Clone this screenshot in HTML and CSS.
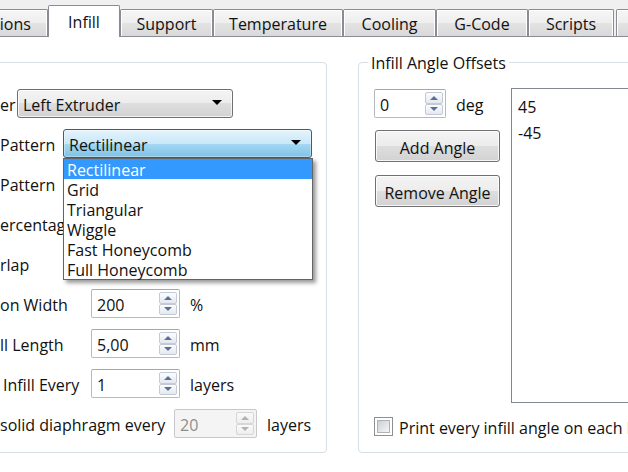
FILE: index.html
```html
<!DOCTYPE html>
<html lang="en">
<head>
<meta charset="utf-8">
<title>Infill</title>
<link rel="stylesheet" href="styles.css">
</head>
<body>
<div class="tabbar">
  <div class="tab tab--options">tions</div>
  <div class="tab tab--active tab--infill">Infill</div>
  <div class="tab tab--support">Support</div>
  <div class="tab tab--temp">Temperature</div>
  <div class="tab tab--cooling">Cooling</div>
  <div class="tab tab--gcode">G-Code</div>
  <div class="tab tab--scripts">Scripts</div>
  <div class="tab tab--next"></div>
</div>
<div class="pane">
  <div class="groups">
    <div class="group group--left">
      <div class="form">
        <div class="row">
          <span class="lbl lbl--w17">er</span>
          <div class="combo combo--extruder"><span class="txt">Left Extruder</span><span class="caret"></span></div>
        </div>
        <div class="row">
          <span class="lbl lbl--w63">Pattern</span>
          <div class="combo combo--pattern combo--pressed"><span class="txt">Rectilinear</span><span class="caret"></span>
            <div class="popup">
              <div class="popup-item popup-item--sel">Rectilinear</div>
              <div class="popup-item">Grid</div>
              <div class="popup-item">Triangular</div>
              <div class="popup-item">Wiggle</div>
              <div class="popup-item">Fast Honeycomb</div>
              <div class="popup-item">Full Honeycomb</div>
            </div>
          </div>
        </div>
        <div class="row"><span class="lbl">Pattern</span></div>
        <div class="row"><span class="lbl lbl--w63 lbl--clip">ercentag</span></div>
        <div class="row"><span class="lbl">rlap</span></div>
        <div class="row">
          <span class="lbl lbl--w91">on Width</span>
          <div class="spin spin--wide"><span class="spin-val txt">200</span><span class="spin-btns"><span class="spin-btn"><span class="arr-up"></span></span><span class="spin-btn"><span class="arr-down"></span></span></span></div>
          <span class="unit">%</span>
        </div>
        <div class="row">
          <span class="lbl lbl--w91">ll Length</span>
          <div class="spin spin--wide"><span class="spin-val txt">5,00</span><span class="spin-btns"><span class="spin-btn"><span class="arr-up"></span></span><span class="spin-btn"><span class="arr-down"></span></span></span></div>
          <span class="unit">mm</span>
        </div>
        <div class="row">
          <span class="lbl lbl--w91 lbl--indent">Infill Every</span>
          <div class="spin spin--wide"><span class="spin-val txt">1</span><span class="spin-btns"><span class="spin-btn"><span class="arr-up"></span></span><span class="spin-btn"><span class="arr-down"></span></span></span></div>
          <span class="unit">layers</span>
        </div>
        <div class="row">
          <span class="lbl lbl--w174">solid diaphragm every</span>
          <div class="spin spin--diaphragm spin--disabled"><span class="spin-val txt">20</span><span class="spin-btns"><span class="spin-btn"><span class="arr-up"></span></span><span class="spin-btn"><span class="arr-down"></span></span></span></div>
          <span class="unit">layers</span>
        </div>
      </div>
    </div>
    <div class="group group--right">
      <span class="group-title">Infill Angle Offsets</span>
      <div class="angle-row">
        <div class="angle-col">
          <div class="angle-spin-row">
            <div class="spin spin--angle"><span class="spin-val txt">0</span><span class="spin-btns"><span class="spin-btn"><span class="arr-up"></span></span><span class="spin-btn"><span class="arr-down"></span></span></span></div>
            <span class="txt">deg</span>
          </div>
          <div class="btn btn--add"><span class="txt">Add Angle</span></div>
          <div class="btn btn--remove"><span class="txt">Remove Angle</span></div>
        </div>
        <div class="listbox">
          <div class="list-item">45</div>
          <div class="list-item">-45</div>
        </div>
      </div>
      <div class="check-row">
        <span class="checkbox"><span class="checkbox-inner"></span></span>
        <span class="check-label txt">Print every infill angle on each layer</span>
      </div>
    </div>
  </div>
</div>
</body>
</html>
```
FILE: styles.css
```css
html, body {
  margin: 0;
  padding: 0;
  overflow: hidden;
}
body {
  width: 628px;
  height: 472px;
  background: #f0f0f0;
  font-family: "Open Sans", "Noto Sans", sans-serif;
  font-size: 16px;
  line-height: 20px;
  color: #111;
}

/* text that sits in a vertically centred flex box: nudge down like the Win7 font */
.txt,
.lbl,
.unit {
  padding-top: 3px;
}

/* ---------- tabs ---------- */
.tabbar {
  display: flex;
  align-items: flex-end;
  height: 36px;
}
.tab {
  flex: none;
  box-sizing: border-box;
  height: 27px;
  border: 1px solid #898c95;
  border-bottom: none;
  border-radius: 2px 2px 0 0;
  background: linear-gradient(#f6f6f6, #eeeeee 50%, #e3e3e3 50%, #d9d9d9);
  box-shadow: inset 1px 1px 0 #fff, inset -1px 0 0 #fff;
  display: flex;
  align-items: center;
  justify-content: center;
  white-space: nowrap;
  padding-top: 2px;
}
.tab--active {
  height: 32px;
  margin-bottom: -1px;
  background: #fff;
  box-shadow: none;
  position: relative;
  z-index: 1;
  padding-top: 0;
}
.tab--options { width: 71px; margin-left: -23px; }
.tab--infill { width: 72px; }
.tab--support { width: 93px; }
.tab--temp { width: 130px; }
.tab--cooling { width: 93px; }
.tab--gcode { width: 92px; }
.tab--scripts { width: 86px; }
.tab--next { width: 60px; margin-left: 2px; }

/* ---------- pane ---------- */
.pane {
  background: #fff;
  border-top: 1px solid #898c95;
  height: 435px;
}
.groups {
  display: flex;
  gap: 31px;
  margin-left: -40px;
  padding-top: 25px;
}
.group {
  flex: none;
  box-sizing: border-box;
  height: 391px;
  border: 1px solid #d5dfe5;
  border-radius: 4px;
}
.group--left {
  width: 367px;
  padding: 26px 0 0 39px;
}
.group--right {
  width: 340px;
  position: relative;
  padding: 25px 0 0 15px;
  display: flex;
  flex-direction: column;
}
.group-title {
  position: absolute;
  top: -10px;
  left: 9px;
  padding: 0 3px;
  background: #fff;
}

/* ---------- form rows ---------- */
.form {
  display: flex;
  flex-direction: column;
  gap: 11px;
}
.row {
  display: flex;
  align-items: center;
  height: 29px;
}
.lbl {
  flex: none;
  white-space: nowrap;
}
.lbl--w17 { width: 17px; }
.lbl--w63 { width: 63px; }
.lbl--w91 { width: 91px; }
.lbl--w174 { width: 174px; }
.lbl--clip { overflow: hidden; }
.lbl--indent { box-sizing: border-box; padding-left: 3px; }
.unit { margin-left: 10px; }

/* ---------- combobox ---------- */
.combo {
  flex: none;
  position: relative;
  box-sizing: border-box;
  height: 29px;
  border: 1px solid #707070;
  border-radius: 3px;
  background: linear-gradient(#f4f4f4, #ececec 50%, #dedede 50%, #d2d2d2);
  box-shadow: inset 0 0 0 1px rgba(255, 255, 255, 0.7);
  display: flex;
  align-items: center;
  justify-content: space-between;
  padding: 0 10px 0 5px;
  white-space: nowrap;
}
.combo--extruder { width: 216px; }
.combo--pattern { width: 249px; }
.combo--pressed {
  border-color: #2c628b;
  background: linear-gradient(#e5f4fc, #c9e8f8 50%, #a6d8f3 50%, #80c2e6);
  box-shadow: inset 0 0 0 1px rgba(255, 255, 255, 0.35);
}
.caret {
  width: 0;
  height: 0;
  margin-bottom: 2px;
  border-left: 5px solid transparent;
  border-right: 5px solid transparent;
  border-top: 5px solid #000;
}

/* ---------- popup list ---------- */
.popup {
  position: absolute;
  top: 28px;
  left: -1px;
  width: 250px;
  box-sizing: border-box;
  border: 1px solid #646464;
  background: #fff;
  box-shadow: 3px 3px 4px rgba(0, 0, 0, 0.4);
  z-index: 5;
}
.popup-item {
  box-sizing: border-box;
  height: 20px;
  line-height: 18px;
  padding: 2px 0 0 3px;
  color: #111;
}
.popup-item--sel {
  background: #3399ff;
  color: #fff;
}

/* ---------- spin box ---------- */
.spin {
  flex: none;
  box-sizing: border-box;
  height: 29px;
  border: 1px solid #b5b9c1;
  border-top-color: #a3a7af;
  border-radius: 2px;
  background: #fff;
  display: flex;
  align-items: center;
  padding-left: 5px;
}
.spin--wide { width: 89px; }
.spin--diaphragm { width: 83px; }
.spin--angle { width: 72px; }
.spin-val { flex: 1; }
.spin-btns {
  flex: none;
  width: 18px;
  height: 23px;
  margin-right: 2px;
  display: flex;
  flex-direction: column;
}
.spin-btn {
  flex: 1;
  box-sizing: border-box;
  border: 1px solid #c3cad6;
  border-radius: 2px;
  background: linear-gradient(#fbfcfd, #e4e8ef);
  display: flex;
  align-items: center;
  justify-content: center;
}
.arr-up {
  width: 0;
  height: 0;
  border-left: 4px solid transparent;
  border-right: 4px solid transparent;
  border-bottom: 4px solid #5c6f99;
}
.arr-down {
  width: 0;
  height: 0;
  border-left: 4px solid transparent;
  border-right: 4px solid transparent;
  border-top: 4px solid #5c6f99;
}
.spin--disabled {
  background: #f4f4f4;
  border-color: #c9c9c9;
  color: #8e8e8e;
}
.spin--disabled .spin-btn {
  border-color: #d6d6d6;
  background: linear-gradient(#fafafa, #eeeeee);
}
.spin--disabled .arr-up { border-bottom-color: #b2b2b2; }
.spin--disabled .arr-down { border-top-color: #b2b2b2; }

/* ---------- right group ---------- */
.angle-row {
  display: flex;
  gap: 10px;
  height: 315px;
}
.angle-col {
  flex: none;
  width: 127px;
  display: flex;
  flex-direction: column;
}
.angle-spin-row {
  display: flex;
  align-items: center;
  gap: 10px;
  margin-top: 1px;
}
.btn {
  box-sizing: border-box;
  width: 125px;
  height: 32px;
  margin-left: 1px;
  border: 1px solid #707070;
  border-radius: 3px;
  background: linear-gradient(#f4f4f4, #ececec 50%, #dedede 50%, #d2d2d2);
  box-shadow: inset 0 0 0 1px rgba(255, 255, 255, 0.8);
  display: flex;
  align-items: center;
  justify-content: center;
  white-space: nowrap;
}
.btn--add { margin-top: 12px; }
.btn--remove { margin-top: 13px; }
.listbox {
  flex: none;
  width: 200px;
  box-sizing: border-box;
  border: 1px solid #828790;
  background: #fff;
  padding: 5px 0 0 6px;
}
.list-item {
  height: 26px;
  line-height: 26px;
}
.check-row {
  display: flex;
  align-items: center;
  gap: 6px;
  margin-top: 14px;
  height: 19px;
  white-space: nowrap;
}
.checkbox {
  flex: none;
  box-sizing: border-box;
  width: 19px;
  height: 19px;
  border: 1px solid #8e8f8f;
  background: #fff;
  padding: 2px;
  display: flex;
}
.checkbox-inner {
  flex: 1;
  border: 1px solid #aeb3b9;
  background: linear-gradient(135deg, #cbcfd5, #f6f6f6);
}
```
